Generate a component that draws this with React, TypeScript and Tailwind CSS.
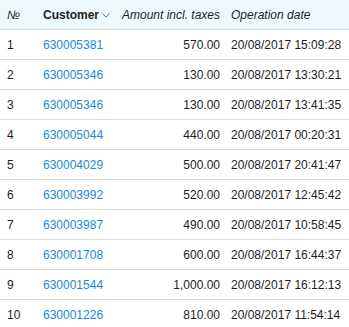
import React from "react";

const rows = [
  ["1", "630005381", "570.00", "20/08/2017 15:09:28"],
  ["2", "630005346", "130.00", "20/08/2017 13:30:21"],
  ["3", "630005346", "130.00", "20/08/2017 13:41:35"],
  ["4", "630005044", "440.00", "20/08/2017 00:20:31"],
  ["5", "630004029", "500.00", "20/08/2017 20:41:47"],
  ["6", "630003992", "520.00", "20/08/2017 12:45:42"],
  ["7", "630003987", "490.00", "20/08/2017 10:58:45"],
  ["8", "630001708", "600.00", "20/08/2017 16:44:37"],
  ["9", "630001544", "1,000.00", "20/08/2017 16:12:13"],
  ["10", "630001226", "810.00", "20/08/2017 11:54:14"],
];

export default function App() {
  return (
    <div
      className="w-[349px] h-[327px] overflow-hidden bg-white text-[12px] text-[#1e1e1e]"
      style={{ fontFamily: '"Liberation Sans", Arial, sans-serif' }}
    >
      <div className="grid grid-cols-[36px_79px_110px_124px] h-[30px] items-center bg-[#eff8fd] border-b border-[#d6dde2]">
        <div className="pl-[7px] italic">№</div>
        <div className="pl-[7px] font-bold flex items-center gap-[3px]">
          Customer
          <svg width="8" height="5" viewBox="0 0 8 5" className="mt-[1px]">
            <path d="M0.5 0.5 L4 4 L7.5 0.5" fill="none" stroke="#777" strokeWidth="1" />
          </svg>
        </div>
        <div className="pr-[5px] text-right italic whitespace-nowrap">Amount incl. taxes</div>
        <div className="pl-[6px] italic whitespace-nowrap">Operation date</div>
      </div>
      {rows.map((r, i) => (
        <div
          key={i}
          className="grid grid-cols-[36px_79px_110px_124px] h-[30px] items-center border-b border-[#dcdcdc]"
        >
          <div className="pl-[7px]">{r[0]}</div>
          <div className="pl-[7px] text-[#1a8ad4]">{r[1]}</div>
          <div className="pr-[5px] text-right">{r[2]}</div>
          <div className="pl-[6px] whitespace-nowrap">{r[3]}</div>
        </div>
      ))}
    </div>
  );
}
